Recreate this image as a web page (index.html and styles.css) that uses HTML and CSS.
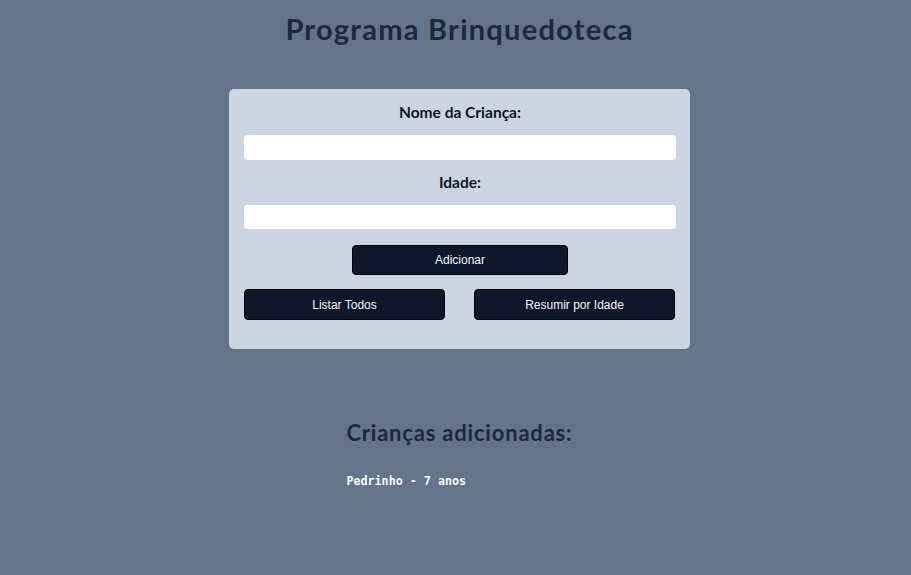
FILE: index.html
```html
<!DOCTYPE html>
<html lang="pt-BR">
<head>
<meta charset="utf-8">
<title>Programa Brinquedoteca</title>
<link rel="stylesheet" href="styles.css">
</head>
<body>
<div class="page">
  <h1 class="title">Programa Brinquedoteca</h1>
  <form class="card">
    <label class="label" for="nome">Nome da Criança:</label>
    <input class="field" id="nome" type="text">
    <label class="label" for="idade">Idade:</label>
    <input class="field" id="idade" type="text">
    <button class="btn btn-add" type="button">Adicionar</button>
    <div class="actions">
      <button class="btn" type="button">Listar Todos</button>
      <button class="btn" type="button">Resumir por Idade</button>
    </div>
  </form>
  <section class="results">
    <h2 class="results-title">Crianças adicionadas:</h2>
    <pre class="list">Pedrinho - 7 anos</pre>
  </section>
</div>
</body>
</html>
```
FILE: styles.css
```css
html, body {
  margin: 0;
  padding: 0;
  background: #64748b;
}
body {
  margin-left: 8px;
  font-family: Lato, "Open Sans", sans-serif;
}
.page {
  display: flex;
  flex-direction: column;
  align-items: center;
}
.title {
  margin: 12px 0 0;
  font-size: 29px;
  line-height: 34px;
  font-weight: 700;
  letter-spacing: 1.25px;
  color: #1e293b;
}
.card {
  margin-top: 43px;
  width: 461px;
  box-sizing: border-box;
  padding: 13px 14px 29px 15px;
  background: #cbd5e1;
  border-radius: 5px;
  display: flex;
  flex-direction: column;
  align-items: center;
}
.label {
  font-size: 15.5px;
  font-weight: 700;
  color: #0f172a;
  line-height: 20px;
}
.field {
  width: 432px;
  height: 25px;
  box-sizing: border-box;
  margin: 13px 0 12px;
  border: none;
  border-radius: 4px;
  background: #fff;
}
.field + .label + .field {
  height: 24px;
  margin-top: 13px;
}
.btn {
  height: 31px;
  box-sizing: border-box;
  background: #0f172a;
  color: #f1f5f9;
  border: 1px solid #000;
  border-radius: 4px;
  font-family: "Liberation Sans", Arial, sans-serif;
  font-size: 12px;
  padding: 0;
}
.btn-add {
  width: 216px;
  height: 30px;
  margin-top: 4px;
}
.actions {
  margin-top: 14px;
  width: 432px;
  display: flex;
  gap: 29px;
}
.actions .btn {
  width: 201px;
}
.results {
  margin-top: 70px;
  display: flex;
  flex-direction: column;
  align-items: flex-start;
}
.results-title {
  margin: 0;
  font-size: 22px;
  line-height: 28px;
  font-weight: 700;
  letter-spacing: 0.8px;
  color: #1e293b;
}
.list {
  margin: 27px 0 0;
  font-family: "DejaVu Sans Mono", monospace;
  font-weight: 700;
  font-size: 11.7px;
  color: #f8fafc;
}
```
